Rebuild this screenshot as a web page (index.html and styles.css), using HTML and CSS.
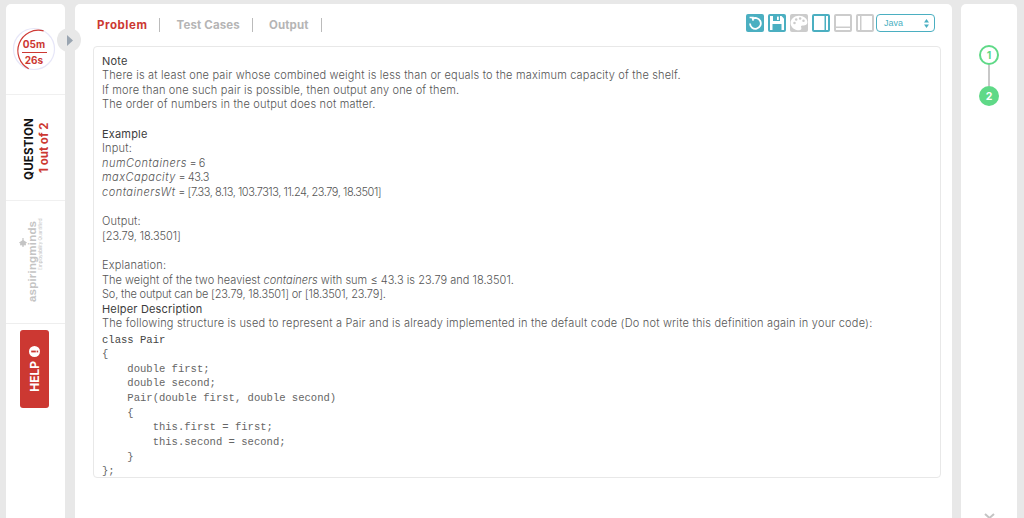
FILE: index.html
```html
<!DOCTYPE html>
<html lang="en">
<head>
    <meta charset="UTF-8" />
    <title>Problem</title>
    <link rel="stylesheet" href="styles.css">
</head>
<body>
    <aside class="side">
        <div class="side-timer">
            <div class="timer">
                <svg class="timer-ring" width="44" height="44" viewBox="0 0 44 44">
                    <circle cx="22" cy="22" r="20.5" fill="none" stroke="#e6e6f8" stroke-width="1.2"/>
                    <path d="M16.7 41.8 A20.5 20.5 0 0 1 31.6 3.9" fill="none" stroke="#cf3a35" stroke-width="1.2"/>
                </svg>
                <span class="timer-min">05m</span>
                <span class="timer-sec">26s</span>
            </div>
        </div>
        <div class="side-question">
            <div class="vertical question-text">
                <span class="question-title">QUESTION</span>
                <span class="question-count">1 out of 2</span>
            </div>
        </div>
        <div class="side-logo">
            <div class="vertical logo-text">
                <svg class="logo-tree" width="8" height="9" viewBox="0 0 8 9" fill="#c4c4c4"><path d="M3.4 0 H4.6 V9 H3.4 Z"/><path d="M4 1 L8 4.5 L4 7 L0 4.5 Z"/><circle cx="2" cy="2.5" r="1"/><circle cx="6" cy="2.5" r="1"/></svg>
                <span class="logo-name">aspiringminds</span>
                <span class="logo-tag">Employability Quantified</span>
            </div>
        </div>
        <div class="side-help">
            <div class="help-btn">
                <span class="vertical help-text">HELP</span>
                <svg width="11" height="11" viewBox="0 0 11 11">
                    <circle cx="5.5" cy="5.5" r="5.5" fill="#fff"/>
                    <rect x="2.2" y="4.6" width="4.6" height="1.8" fill="#cc3832"/>
                    <rect x="7.6" y="4.6" width="1.6" height="1.8" fill="#cc3832"/>
                </svg>
            </div>
        </div>
    </aside>

    <button class="collapse" aria-label="Collapse">
        <svg width="6" height="11" viewBox="0 0 6 11"><path d="M0 0 L6 5.5 L0 11 Z" fill="#9aa5b1"/></svg>
    </button>

    <main class="content">
        <header class="topbar">
            <nav class="tabs">
                <span class="tab active">Problem</span>
                <span class="tab">Test Cases</span>
                <span class="tab">Output</span>
            </nav>
            <div class="tools">
                <span class="tool tool-on">
                    <svg width="14" height="14" viewBox="0 0 14 14" fill="none" stroke="#fff" stroke-width="1.8"><path d="M4 3.2 A5.4 5.4 0 1 1 2 7.5"/><path d="M1.6 1.4 H5 V4.8" stroke-width="1.5"/></svg>
                </span>
                <span class="tool tool-on">
                    <svg width="16" height="16" viewBox="0 0 16 16"><path d="M1 1 H12.5 L15 3.5 V15 H1 Z" fill="#fff"/><rect x="4" y="1" width="7" height="5" fill="#4bafc1"/><rect x="8" y="1.6" width="1.8" height="3.4" fill="#fff"/><rect x="3.5" y="9" width="9" height="6" fill="#4bafc1"/></svg>
                </span>
                <span class="tool tool-off">
                    <svg width="18" height="16" viewBox="0 0 16 14"><path d="M8 0.5 C12.5 0.5 15.5 3.2 15.5 6.4 C15.5 9 13 9.4 11.4 9.2 C9.8 9 9.4 10 10 11 C10.6 12.4 9.6 13.5 8 13.5 C3.8 13.5 0.5 10.6 0.5 7 C0.5 3.4 3.8 0.5 8 0.5 Z" fill="#fff"/><circle cx="4" cy="7" r="1.1" fill="#ccc"/><circle cx="5.5" cy="3.8" r="1.1" fill="#ccc"/><circle cx="9" cy="3" r="1.1" fill="#ccc"/><circle cx="12" cy="5" r="1.1" fill="#ccc"/></svg>
                </span>
                <span class="tool tool-on">
                    <svg width="16" height="16" viewBox="0 0 16 16" fill="#fff"><rect x="1" y="1" width="10.5" height="14"/><rect x="13" y="1" width="2" height="14"/></svg>
                </span>
                <span class="tool tool-off">
                    <svg width="16" height="16" viewBox="0 0 16 16" fill="#fff"><rect x="1" y="1" width="14" height="10.5"/><rect x="1" y="13" width="14" height="2"/></svg>
                </span>
                <span class="tool tool-off">
                    <svg width="16" height="16" viewBox="0 0 16 16" fill="#fff"><rect x="1" y="1" width="2" height="14"/><rect x="4.5" y="1" width="10.5" height="14"/></svg>
                </span>
                <div class="lang">
                    <span>Java</span>
                    <svg width="5" height="9" viewBox="0 0 5 9" fill="#4bafc1"><path d="M2.5 0 L5 3.4 H0 Z"/><path d="M2.5 9 L5 5.6 H0 Z"/></svg>
                </div>
            </div>
        </header>

        <section class="problem">
            <p class="head">Note</p>
            <p>There is at least one pair whose combined weight is less than or equals to the maximum capacity of the shelf.</p>
            <p>If more than one such pair is possible, then output any one of them.</p>
            <p>The order of numbers in the output does not matter.</p>
            <p></p>
            <p class="head">Example</p>
            <p>Input:</p>
            <p class="tight"><em>numContainers</em> = 6</p>
            <p class="tight"><em>maxCapacity</em> = 43.3</p>
            <p class="tight"><em>containersWt</em> = [7.33, 8.13, 103.7313, 11.24, 23.79, 18.3501]</p>
            <p></p>
            <p>Output:</p>
            <p class="result">[23.79, 18.3501]</p>
            <p></p>
            <p>Explanation:</p>
            <p class="mixed">The weight of the two heaviest <em>containers</em> with sum ≤ 43.3 is 23.79 and 18.3501.</p>
            <p class="mixed-so">So, the output can be [23.79, 18.3501] or [18.3501, 23.79].</p>
            <p class="head">Helper Description</p>
            <p class="long">The following structure is used to represent a Pair and is already implemented in the default code (Do not write this definition again in your code):</p>
<pre class="code"><span class="code-first">class Pair</span>
{
    double first;
    double second;
    Pair(double first, double second)
    {
        this.first = first;
        this.second = second;
    }
};</pre>
        </section>
    </main>

    <aside class="steps">
        <div class="step step-open">1</div>
        <div class="step-line"></div>
        <div class="step step-done">2</div>
        <svg class="steps-more" width="11" height="6" viewBox="0 0 11 6" fill="none" stroke="#c4c4c4" stroke-width="2"><path d="M1 1 L5.5 5 L10 1"/></svg>
    </aside>
</body>
</html>
```

FILE: styles.css
```css
* {
    box-sizing: border-box;
}

html, body {
    height: 100%;
}

body {
    margin: 0;
    padding: 4px 7px 0 6px;
    background: #e8e8e8;
    display: flex;
    overflow: hidden;
    position: relative;
    font-family: Inter, "Open Sans", sans-serif;
    color: #444;
}

/* barra esquerda */
.side {
    width: 59px;
    margin-right: 10px;
    background: #fff;
    border-radius: 5px 5px 0 0;
    display: flex;
    flex-direction: column;
    flex-shrink: 0;
}

.side-timer {
    height: 91px;
    border-bottom: 1px solid #f0f0f0;
    padding: 23px 0 0 6px;
}

.timer {
    width: 44px;
    height: 44px;
    padding-top: 6px;
    position: relative;
    display: flex;
    flex-direction: column;
    align-items: center;
    justify-content: center;
    color: #cc3832;
    font-size: 10px;
    font-weight: 700;
    line-height: 13px;
}

.timer-ring {
    position: absolute;
    left: 0;
    top: 0;
}

.timer-min {
    border-bottom: 1px solid #cc3832;
    width: 25px;
    text-align: center;
    padding-bottom: 1px;
}

.timer-sec {
    padding-top: 1px;
}

.vertical {
    writing-mode: vertical-rl;
    transform: rotate(180deg);
}

.side-question {
    height: 106px;
    border-bottom: 1px solid #f0f0f0;
    display: flex;
    align-items: center;
    justify-content: center;
    padding: 2px 0 0 3px;
}

.question-text {
    display: flex;
    flex-direction: column;
    align-items: center;
    line-height: 15px;
    font-weight: 700;
    font-size: 11.5px;
}

.question-title {
    color: #111;
    letter-spacing: 0.2px;
}

.question-count {
    color: #cc3832;
    margin-top: 3px;
}

.side-logo {
    height: 123px;
    border-bottom: 1px solid #eee;
    display: flex;
    padding: 18px 0 0 13px;
}

.logo-text {
    display: flex;
    flex-direction: column;
    align-items: center;
    height: 84px;
    color: #c4c4c4;
}

.logo-tree {
    align-self: flex-end;
    margin-bottom: 19px;
}

.logo-name {
    font-family: "Liberation Sans", sans-serif;
    font-weight: 700;
    font-size: 11.5px;
    line-height: 10px;
    letter-spacing: 0.2px;
}

.logo-tag {
    font-size: 4.5px;
    line-height: 7px;
    align-self: flex-end;
    white-space: nowrap;
}

.side-help {
    display: flex;
    justify-content: center;
    padding: 6px 2px 0 0;
}

.help-btn {
    width: 29px;
    height: 78px;
    background: #cc3832;
    border-radius: 3px;
    display: flex;
    flex-direction: column-reverse;
    align-items: center;
    justify-content: center;
    gap: 4px;
}

.help-text {
    color: #fff;
    font-weight: 700;
    font-size: 12px;
}

.collapse {
    position: absolute;
    left: 57px;
    top: 28px;
    width: 24px;
    height: 24px;
    padding: 0 0 0 2px;
    border: none;
    border-radius: 50%;
    background: #e8e8e8;
    display: flex;
    align-items: center;
    justify-content: center;
}

/* painel principal */
.content {
    width: 877px;
    margin-right: 9px;
    background: #fff;
    border-radius: 5px 5px 0 0;
    padding: 0 11px 0 18px;
    flex-shrink: 0;
}

.topbar {
    height: 42px;
    display: flex;
    justify-content: space-between;
    padding: 10px 6px 0 4px;
}

.tabs {
    display: flex;
    height: 22px;
    align-items: center;
    font-size: 11.5px;
    font-weight: 700;
    letter-spacing: 0.15px;
    color: #b5b5b5;
}

.tab {
    border-right: 1px solid #bbb;
    line-height: 14px;
    padding-right: 12px;
    margin-right: 16px;
}

.tab.active {
    color: #cc3832;
    letter-spacing: 0.55px;
}

.tools {
    display: flex;
    gap: 4px;
}

.tool {
    width: 18px;
    height: 18px;
    border-radius: 2px;
    display: flex;
    align-items: center;
    justify-content: center;
}

.tool-on {
    background: #4bafc1;
}

.tool-off {
    background: #ccc;
}

.lang {
    width: 59px;
    height: 18px;
    margin-left: -2px;
    border: 1.5px solid #4bafc1;
    border-radius: 4px;
    padding: 0 5px 0 7px;
    display: flex;
    align-items: center;
    justify-content: space-between;
    font-family: "Liberation Sans", sans-serif;
    font-size: 9px;
    color: #4bafc1;
}

.problem {
    height: 432px;
    border: 1px solid #e8e8e8;
    border-radius: 4px;
    padding: 6.5px 8px;
    font-size: 11px;
    font-weight: 300;
    line-height: 14.62px;
    letter-spacing: 0.18px;
    color: #555;
}

.problem p {
    margin: 0;
    height: 14.62px;
}

.problem .head {
    font-weight: 400;
    color: #3c3c3c;
}

.problem .tight {
    letter-spacing: -0.45px;
}

.problem .tight em {
    letter-spacing: 0.5px;
}

.problem .result {
    letter-spacing: -0.1px;
}

.problem .mixed {
    letter-spacing: 0.03px;
}

.problem .mixed-so {
    letter-spacing: -0.16px;
}

.problem .long {
    letter-spacing: 0.2px;
}

.code {
    margin: 1.5px 0 0;
    font-family: "Liberation Mono", monospace;
    font-size: 10.55px;
    line-height: 14.62px;
    font-weight: 400;
    letter-spacing: 0;
    color: #666;
}

.code-first {
    color: #444;
}

/* passos da direita */
.steps {
    width: 56px;
    background: #fff;
    border-radius: 5px 5px 0 0;
    display: flex;
    flex-direction: column;
    align-items: center;
    padding-top: 41px;
    position: relative;
    flex-shrink: 0;
}

.step {
    width: 20px;
    height: 20px;
    border-radius: 50%;
    display: flex;
    align-items: center;
    justify-content: center;
    font-size: 10.5px;
    font-weight: 700;
}

.step-open {
    border: 2px solid #5fd987;
    color: #5fd987;
}

.step-done {
    background: #5fd987;
    color: #fff;
}

.step-line {
    width: 2px;
    height: 21px;
    background: #c8c8c8;
}

.steps-more {
    position: absolute;
    left: 23px;
    bottom: -1px;
}
```
